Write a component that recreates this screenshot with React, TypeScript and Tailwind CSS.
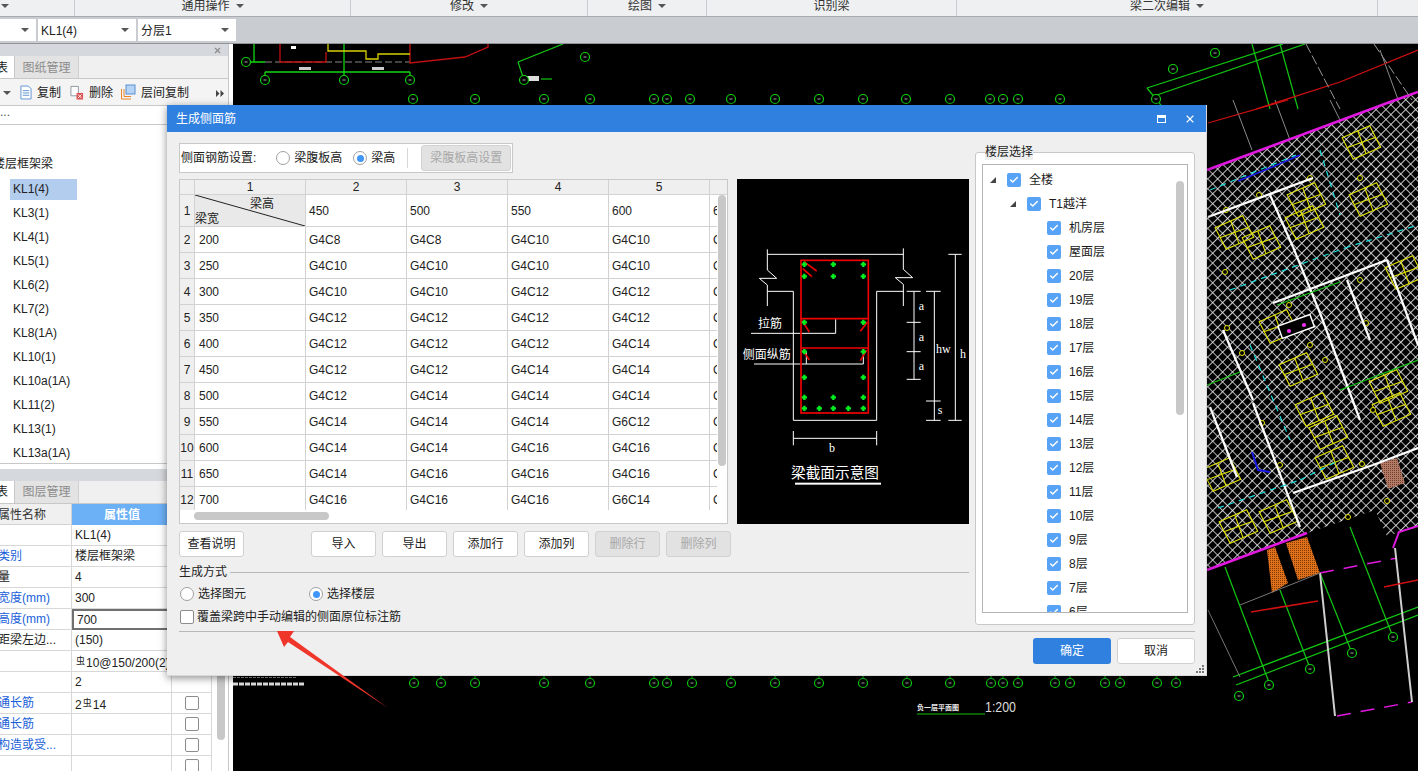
import React from 'react';
import { Check, X } from 'lucide-react';

const FONT = "font-['Liberation_Sans','Noto_Sans_CJK_SC',sans-serif]";

const kls = ['KL1(4)', 'KL3(1)', 'KL4(1)', 'KL5(1)', 'KL6(2)', 'KL7(2)', 'KL8(1A)', 'KL10(1)', 'KL10a(1A)', 'KL11(2)', 'KL13(1)', 'KL13a(1A)'];

const gridRows = [
  ['200', 'G4C8', 'G4C8', 'G4C10', 'G4C10'],
  ['250', 'G4C10', 'G4C10', 'G4C10', 'G4C10'],
  ['300', 'G4C10', 'G4C10', 'G4C12', 'G4C12'],
  ['350', 'G4C12', 'G4C12', 'G4C12', 'G4C12'],
  ['400', 'G4C12', 'G4C12', 'G4C12', 'G4C14'],
  ['450', 'G4C12', 'G4C12', 'G4C14', 'G4C14'],
  ['500', 'G4C12', 'G4C14', 'G4C14', 'G4C14'],
  ['550', 'G4C14', 'G4C14', 'G4C14', 'G6C12'],
  ['600', 'G4C14', 'G4C14', 'G4C16', 'G4C16'],
  ['650', 'G4C14', 'G4C16', 'G4C16', 'G4C16'],
  ['700', 'G4C16', 'G4C16', 'G4C16', 'G6C14'],
];

const floors = ['机房层', '屋面层', '20层', '19层', '18层', '17层', '16层', '15层', '14层', '13层', '12层', '11层', '10层', '9层', '8层', '7层', '6层'];

const Rebar = () => <span className="text-[9px] align-[3px] mx-[1px]">虫</span>;

const attrs: { label: string; value: React.ReactNode; blue?: boolean; focus?: boolean; check?: boolean }[] = [
  { label: '', value: 'KL1(4)' },
  { label: '类别', value: '楼层框架梁', blue: true },
  { label: '量', value: '4' },
  { label: '宽度(mm)', value: '300', blue: true },
  { label: '高度(mm)', value: '700', blue: true, focus: true },
  { label: '距梁左边...', value: '(150)' },
  { label: '', value: <><Rebar />10@150/200(2)</> },
  { label: '', value: '2' },
  { label: '通长筋', value: <>2<Rebar />14</>, blue: true, check: true },
  { label: '通长筋', value: '', blue: true, check: true },
  { label: '构造或受...', value: '', blue: true, check: true },
  { label: '', value: '', check: true },
];

const topCircles = [413, 475, 544, 590, 654, 667, 690, 731, 775, 819, 863, 906, 950, 990, 1003, 1018, 1060, 1156];
const bottomCircles = [414, 441, 475, 544, 590, 654, 667, 692, 731, 775, 819, 863, 907, 950, 991, 1003, 1018, 1055, 1070, 1105, 1120, 1157, 1176];
const yellowBoxes = [
  [1360, 143], [1305, 200], [1367, 200], [1233, 233], [1260, 243], [1303, 223], [1403, 273], [1277, 327],
  [1297, 370], [1387, 387], [1327, 433], [1220, 475], [1333, 463], [1237, 527], [1277, 517], [1390, 410], [1313, 410],
];
const yellowDots = [
  [1360, 178], [1259, 195], [1310, 178], [1225, 272], [1226, 210], [1360, 280], [1289, 305], [1310, 345], [1366, 323],
  [1227, 328], [1242, 353], [1325, 360], [1262, 423], [1280, 465], [1362, 464], [1373, 410], [1348, 517], [1387, 501],
];
const whiteLines = [
  [1208, 217, 1313, 178], [1270, 195, 1293, 247], [1293, 247, 1320, 313], [1273, 303, 1387, 260], [1347, 280, 1370, 340],
  [1223, 330, 1253, 400], [1210, 407, 1237, 477], [1253, 403, 1300, 527], [1293, 493, 1373, 465], [1373, 465, 1418, 448],
  [1387, 260, 1418, 345], [1320, 313, 1360, 420],
];
const cyanLines = [
  [1210, 190, 1296, 155], [1320, 150, 1340, 215], [1230, 290, 1345, 248], [1345, 248, 1418, 225], [1250, 345, 1290, 440],
  [1218, 508, 1300, 480], [1300, 480, 1340, 460],
];
const greenLines = [
  [1233, 677, 1418, 607], [1236, 685, 1418, 615], [1225, 567, 1270, 685], [1280, 590, 1310, 668], [1320, 573, 1352, 653],
  [1350, 527, 1393, 637], [1277, 305, 1340, 282], [1207, 385, 1240, 372], [1340, 390, 1418, 360], [1147, 88, 1283, 44],
  [1154, 96, 1305, 44], [1147, 88, 1156, 99], [1156, 99, 1165, 110], [518, 62, 563, 44], [518, 62, 524, 80], [541, 79, 552, 79],
  [1252, 44, 1270, 109], [1280, 44, 1298, 109],
];

// 绘图区底图,坐标直接用屏幕坐标
const CadCanvas = () => (
  <svg viewBox="233 44 1185 727" className="block w-full h-full">
    <defs>
      <pattern id="hatch" width="7" height="7" patternUnits="userSpaceOnUse" patternTransform="rotate(45)">
        <path d="M0 0H7M0 0V7" stroke="#f0f0f0" strokeWidth="1.7" fill="none" />
      </pattern>
      <pattern id="orange" width="2" height="2" patternUnits="userSpaceOnUse">
        <rect width="2" height="2" fill="#e0701a" />
        <rect width="1" height="1" fill="#7a3a00" />
      </pattern>
      <pattern id="brown" width="2" height="2" patternUnits="userSpaceOnUse">
        <rect width="2" height="2" fill="#b47a66" />
        <rect width="1" height="1" fill="#6a4030" />
      </pattern>
    </defs>
    <rect x="233" y="44" width="1185" height="727" fill="#000" />
    <polygon points="1207,170 1418,92 1418,527 1387,536 1375,510 1307,533 1207,570" fill="url(#hatch)" />
    <path d="M1233 100L1252 150M1275 100L1290 140M1330 100L1340 120M1380 50L1400 105" stroke="#8a8a8a" fill="none" />
    <polyline points="1207,170 1390,102 1418,92" stroke="#e018e0" strokeWidth="2.5" fill="none" />
    <polyline points="1207,570 1307,533" stroke="#e018e0" strokeWidth="2.5" fill="none" />
    <polyline points="1393,548 1399,532 1418,526" stroke="#e018e0" strokeWidth="2" fill="none" />
    <line x1="1320" y1="573" x2="1397" y2="558" stroke="#e018e0" strokeWidth="1.5" strokeDasharray="14 10" />
    <line x1="1337" y1="716" x2="1412" y2="702" stroke="#e018e0" strokeWidth="1.5" strokeDasharray="14 10" />
    <polygon points="1267,550 1275,547 1288,583 1272,593" fill="url(#orange)" />
    <polygon points="1286,543 1307,537 1320,573 1298,580" fill="url(#orange)" />
    <polygon points="1380,463 1397,458 1405,483 1388,489" fill="url(#brown)" />
    {yellowBoxes.map(([x, y], i) => (
      <g key={i} transform={`rotate(-20 ${x} ${y})`} stroke="#e4e400" strokeWidth="1.1" fill="none">
        <path d={`M${x - 15} ${y - 11}L${x + 15} ${y - 13}L${x + 18} ${y + 11}L${x - 12} ${y + 13}Z`} />
        <path d={`M${x - 14} ${y}H${x + 16}M${x + 2} ${y - 12}V${y + 12}`} />
      </g>
    ))}
    {yellowDots.map(([x, y], i) => (
      <circle key={i} cx={x} cy={y} r={2.5} stroke="#e8e800" fill="#000" />
    ))}
    {whiteLines.map(([a, b, c, d], i) => (
      <line key={i} x1={a} y1={b} x2={c} y2={d} stroke="#ffffff" strokeWidth="2.2" />
    ))}
    {cyanLines.map(([a, b, c, d], i) => (
      <line key={i} x1={a} y1={b} x2={c} y2={d} stroke="#19e0e0" strokeWidth="1.2" strokeDasharray="6 5" />
    ))}
    <polyline points="1238,181 1270,168 1300,155" stroke="#1a1ae8" strokeWidth="1.5" fill="none" />
    <polyline points="1252,452 1258,470 1270,472" stroke="#1a1ae8" strokeWidth="2" fill="none" />
    <rect x="1279" y="320" width="34" height="13" transform="rotate(-20 1296 326)" fill="#000" stroke="#fff" strokeWidth="1.5" />
    <circle cx="1289" cy="331" r="2" fill="#ff30ff" />
    <circle cx="1304" cy="325" r="2" fill="#ff30ff" />
    {greenLines.map(([a, b, c, d], i) => (
      <line key={i} x1={a} y1={b} x2={c} y2={d} stroke="#12c812" strokeWidth="1.2" />
    ))}
    <path d="M1320 573L1335 716M1395 548L1412 702" stroke="#cfcfcf" strokeWidth="2" fill="none" />
    <path d="M1208 610L1240 677M1240 605L1320 573" stroke="#777" strokeWidth="1" fill="none" />
    <path d="M1251 612L1318 601M1384 587L1418 580" stroke="#d01010" strokeWidth="1.5" fill="none" />
    <path d="M1256 109L1340 82L1418 50" stroke="#d01010" strokeWidth="1.2" fill="none" />
    <path d="M1306 44L1340 109M1374 44L1412 100" stroke="#999" strokeWidth="1" strokeDasharray="10 3" fill="none" />
    <path d="M1208 123L1288 100" stroke="#d01010" strokeWidth="1.2" fill="none" />

    <path d="M254 44V62H265M265 72H410M344 44V72M265 72V80M344 72V80M410 72V80M246 62H254" stroke="#12d812" strokeWidth="1.3" fill="none" />
    <path d="M265 62H410" stroke="#888" strokeWidth="1.2" strokeDasharray="7 3" fill="none" />
    <path d="M280 44V62H326V52M410 44V63L465 57L488 47V44" stroke="#c01010" strokeWidth="1.3" fill="none" />
    <path d="M328 44V51H366V59H378V54H410" stroke="#d8d000" strokeWidth="1.3" fill="none" />
    <rect x="299" y="67" width="12" height="3" fill="#ccc" />
    <rect x="372" y="67" width="12" height="3" fill="#ccc" />
    <rect x="291" y="46" width="5" height="3" fill="#fff" />
    <rect x="525" y="76" width="14" height="5" fill="#ddd" />
    {[[246, 62], [265, 80], [344, 80], [410, 80], [585, 57], [524, 80], [1173, 69], [1215, 53], [1239, 696], [1269, 685], [1310, 669], [1352, 653], [1393, 637]].map(([x, y], i) => (
      <g key={i}>
        <circle cx={x} cy={y} r={4.5} stroke="#10d010" strokeWidth="1.2" fill="#000" />
        <rect x={x - 1.5} y={y - 0.5} width={3} height={1} fill="#aaa" />
      </g>
    ))}
    {topCircles.map((x) => (
      <g key={x}>
        <circle cx={x} cy={99} r={4.5} stroke="#10d010" strokeWidth="1.2" fill="#000" />
        <rect x={x - 1.5} y={98.5} width={3} height={1} fill="#aaa" />
      </g>
    ))}
    {bottomCircles.map((x) => (
      <g key={x}>
        <path d={`M${x} 676V679`} stroke="#10d010" />
        <circle cx={x} cy={683} r={4.5} stroke="#10d010" strokeWidth="1.2" fill="#000" />
        <rect x={x - 1.5} y={682.5} width={3} height={1} fill="#aaa" />
      </g>
    ))}
    <line x1="233" y1="684" x2="305" y2="684" stroke="#ddd" strokeWidth="3" strokeDasharray="5 1" />
    <line x1="233" y1="677.5" x2="296" y2="677.5" stroke="#888" strokeWidth="1" strokeDasharray="3 1" />
    <text x="917" y="710" fill="#e8e8e8" fontSize="7" fontWeight="700">负一层平面图</text>
    <line x1="917" y1="714" x2="985" y2="714" stroke="#10c010" strokeWidth="1.2" />
    <text x="985" y="712" fill="#dcdcdc" fontSize="15" textLength="31" lengthAdjust="spacingAndGlyphs">1:200</text>
  </svg>
);

// 梁截面示意图
const BeamPreview = () => (
  <svg viewBox="21 27 696 1035" width="232" height="345" className="block bg-black shrink-0">
    <g stroke="#fff" strokeWidth="3" fill="none">
      <path d="M112 238V300L140 325H88L112 345V408M112 253H520M520 235V298L548 323H496L520 343V408" />
      <path d="M112 364H190V751H440V364H520" />
      <path d="M63 490H317V446M72 582H400V545M229 545V582" />
      <path d="M552 364V628M530 364H572M530 457H572M530 545H572M530 628H572" />
      <path d="M613 364V751M588 364H632M588 693H632M588 751H632" />
      <path d="M676 253V751M655 253H695M655 751H695" />
      <path d="M190 805H440M190 783V826M440 783V826" />
    </g>
    <g stroke="#f00000" strokeWidth="5" fill="none">
      <rect x="213" y="271" width="202" height="458" />
      <path d="M213 446H415M213 534H415" />
      <path d="M222 275L260 303M218 296L246 320M216 452L238 486M412 457L391 484M218 540L238 570M410 540L391 572" />
    </g>
    {[[223, 283], [310, 283], [400, 283], [223, 319], [310, 319], [400, 319], [223, 457], [400, 457], [223, 545], [400, 545], [223, 622], [400, 622], [223, 682], [310, 682], [400, 682], [223, 715], [268, 715], [310, 715], [355, 715], [400, 715]].map(([x, y], i) => (
      <path key={i} d={`M${x - 8} ${y}H${x + 8}M${x} ${y - 8}V${y + 8}`} stroke="#00f020" strokeWidth="7" />
    ))}
    <g fill="#fff" fontSize="36">
      <text x="84" y="475">拉筋</text>
      <text x="38" y="568">侧面纵筋</text>
      <text x="566" y="420" fontFamily="'Liberation Serif',serif">a</text>
      <text x="566" y="514" fontFamily="'Liberation Serif',serif">a</text>
      <text x="566" y="600" fontFamily="'Liberation Serif',serif">a</text>
      <text x="618" y="548" fontFamily="'Liberation Serif',serif">hw</text>
      <text x="690" y="564" fontFamily="'Liberation Serif',serif">h</text>
      <text x="623" y="733" fontFamily="'Liberation Serif',serif">s</text>
      <text x="297" y="846" fontFamily="'Liberation Serif',serif">b</text>
      <text x="183" y="925" fontSize="44">梁截面示意图</text>
    </g>
    <rect x="195" y="938" width="258" height="6" fill="#fff" />
  </svg>
);

const Radio = ({ checked, label, className = '' }: { checked?: boolean; label: string; className?: string }) => (
  <span className={`flex items-center gap-[4px] ${className}`}>
    <span className="w-[14px] h-[14px] rounded-full bg-white border border-[#a0a0a0] flex items-center justify-center shrink-0">
      {checked && <span className="w-[7px] h-[7px] rounded-full bg-[#3f96f7]" />}
    </span>
    <span>{label}</span>
  </span>
);

const TreeCheck = ({ label, indent }: { label: string; indent: string }) => (
  <div className={`h-[24px] flex items-center gap-[8px] ${indent}`}>
    <span className="w-[14px] h-[14px] rounded-[2px] bg-[#57a3f8] flex items-center justify-center shrink-0">
      <Check size={10} strokeWidth={3.5} className="text-white" />
    </span>
    <span className="text-[12px] text-[#1a1a1a]">{label}</span>
  </div>
);

const Caret = () => <span className="w-0 h-0 border-l-[4px] border-r-[4px] border-t-[4px] border-l-transparent border-r-transparent border-t-[#555]" />;

const DialogButton = ({ label, disabled, className = '' }: { label: string; disabled?: boolean; className?: string }) => (
  <button
    className={`w-[65px] h-[26px] rounded-[3px] border text-[12px] ${
      disabled ? 'bg-[#e2e2e2] border-[#d2d2d2] text-[#a8a8a8]' : 'bg-white border-[#d0d0d0] text-[#222]'
    } ${className}`}
  >
    {label}
  </button>
);

const cellLine = 'border-r border-b border-[#d2d2d2]';

const SideRebarGrid = () => (
  <div className="relative w-[549px] h-[345px] border border-[#c8c8c8] bg-white overflow-hidden shrink-0">
    <div className="h-[332px] overflow-hidden">
      <div className="grid grid-cols-[15px_111px_101px_101px_101px_101px_101px] text-[12px] text-[#222]">
        <div className={`h-[15px] bg-[#efefef] ${cellLine}`} />
        {['1', '2', '3', '4', '5', '6'].map((n) => (
          <div key={n} className={`h-[15px] leading-[14px] text-center bg-[#efefef] ${cellLine}`}>{n}</div>
        ))}
        <div className={`h-[32px] flex items-center justify-center bg-[#efefef] ${cellLine}`}>1</div>
        <div className={`relative h-[32px] bg-[#e9e9e9] ${cellLine}`}>
          <svg className="absolute inset-0" width="110" height="31">
            <line x1="0" y1="0" x2="110" y2="31" stroke="#222" strokeWidth="1" />
          </svg>
          <span className="absolute right-[31px] top-[1px] leading-[16px]">梁高</span>
          <span className="absolute left-0 -bottom-[1px] leading-[15px]">梁宽</span>
        </div>
        {['450', '500', '550', '600', '650'].map((h) => (
          <div key={h} className={`h-[32px] leading-[33px] pl-[3px] whitespace-nowrap overflow-hidden ${cellLine}`}>{h}</div>
        ))}
        {gridRows.map((row, i) => (
          <React.Fragment key={row[0]}>
            <div className={`h-[26px] leading-[26px] text-center bg-[#efefef] ${cellLine}`}>{i + 2}</div>
            {row.map((c, j) => (
              <div key={j} className={`h-[26px] leading-[27px] ${j === 0 ? 'pl-[4px]' : 'pl-[3px]'} ${cellLine}`}>{c}</div>
            ))}
            <div className={`h-[26px] leading-[27px] pl-[3px] overflow-hidden ${cellLine}`}>G4C10</div>
          </React.Fragment>
        ))}
      </div>
    </div>
    <div className="absolute right-0 top-[15px] bottom-[14px] w-[10px] bg-white" />
    <div className="absolute right-[1px] top-[15px] w-[8px] h-[271px] rounded-[4px] bg-[#c8c8c8]" />
    <div className="absolute left-0 right-0 bottom-0 h-[13px] bg-white" />
    <div className="absolute left-[14px] bottom-[3px] w-[135px] h-[8px] rounded-[4px] bg-[#c8c8c8]" />
  </div>
);

const Dialog = () => (
  <div className="absolute left-[167px] top-[105px] w-[1040px] h-[571px] bg-[#efefef] border-r border-b border-[#d8d8d8] shadow-[0_2px_8px_rgba(0,0,0,0.45)] flex flex-col text-[12px] text-[#222]">
    <div className="h-[27px] bg-[#2f80df] flex items-center justify-between pl-[9px] pr-[10px] text-white shrink-0">
      <span>生成侧面筋</span>
      <div className="flex items-center gap-[18px]">
        <span className="w-[9px] h-[8px] border border-white border-t-[3px]" />
        <X size={12} strokeWidth={2.2} />
      </div>
    </div>
    <div className="flex-1 flex flex-col pt-[11px] pl-[12px] pr-[11px] relative">
      <div className="flex gap-[6px] h-[488px]">
        <div className="w-[790px] shrink-0">
          <div className="w-[334px] h-[30px] bg-white border border-[#c8c8c8] flex items-center pl-[1px]">
            <span className="mr-[20px] whitespace-nowrap">侧面钢筋设置:</span>
            <Radio label="梁腹板高" />
            <Radio checked label="梁高" className="ml-[11px]" />
            <span className="w-px h-[20px] bg-[#d8d8d8] ml-[12px] mr-[13px]" />
            <button className="w-[90px] h-[26px] bg-[#e2e2e2] border border-[#d2d2d2] rounded-[3px] text-[#a8a8a8]">梁腹板高设置</button>
          </div>
          <div className="flex gap-[9px] mt-[6px]">
            <SideRebarGrid />
            <BeamPreview />
          </div>
          <div className="flex mt-[7px] w-[552px]">
            <DialogButton label="查看说明" className="mr-[67px]" />
            <div className="flex gap-[6px]">
              <DialogButton label="导入" />
              <DialogButton label="导出" />
              <DialogButton label="添加行" />
              <DialogButton label="添加列" />
              <DialogButton label="删除行" disabled />
              <DialogButton label="删除列" disabled />
            </div>
          </div>
          <div className="flex items-center mt-[6px] h-[18px]">
            <span>生成方式</span>
            <span className="flex-1 h-px bg-[#b8b8b8] ml-[3px]" />
          </div>
          <div className="flex items-center mt-[4px] h-[18px] pl-[1px]">
            <Radio label="选择图元" className="w-[129px]" />
            <Radio checked label="选择楼层" />
          </div>
          <div className="flex items-center gap-[3px] mt-[5px] h-[18px] pl-[1px]">
            <span className="w-[14px] h-[14px] rounded-[2px] bg-white border border-[#8c8c8c]" />
            <span>覆盖梁跨中手动编辑的侧面原位标注筋</span>
          </div>
        </div>
        <fieldset className="relative w-[220px] h-[473px] mt-[9px] bg-white border border-[#c8c8c8] rounded-[3px] px-[6px] pt-[11px]">
          <span className="absolute left-[9px] -top-[9px] leading-[16px] bg-[#efefef]">楼层选择</span>
          <div className="relative h-[449px] border border-[#b4b4b4] overflow-hidden pt-[3px]">
            <div className="h-[24px] flex items-center pl-[7px]">
              <span className="w-0 h-0 border-l-[6px] border-b-[6px] border-l-transparent border-b-[#444] mr-[11px]" />
              <TreeCheck label="全楼" indent="" />
            </div>
            <div className="h-[24px] flex items-center pl-[27px]">
              <span className="w-0 h-0 border-l-[6px] border-b-[6px] border-l-transparent border-b-[#444] mr-[11px]" />
              <TreeCheck label="T1越洋" indent="" />
            </div>
            {floors.map((f) => (
              <TreeCheck key={f} label={f} indent="pl-[64px]" />
            ))}
            <div className="absolute right-[3px] top-[16px] w-[8px] h-[234px] rounded-[4px] bg-[#c8c8c8]" />
          </div>
        </fieldset>
      </div>
      <div className="h-px bg-[#b8b8b8]" />
      <div className="flex justify-end gap-[6px] mt-[6px]">
        <button className="w-[78px] h-[26px] rounded-[3px] bg-[#2f80df] text-white">确定</button>
        <button className="w-[78px] h-[26px] rounded-[3px] bg-white border border-[#d0d0d0]">取消</button>
      </div>
      <svg className="absolute right-[1px] bottom-[1px]" width="9" height="9">
        <path d="M6 0h2v2h-2zM3 3h2v2h-2zM6 3h2v2h-2zM0 6h2v2h-2zM3 6h2v2h-2zM6 6h2v2h-2z" fill="#777" />
      </svg>
    </div>
  </div>
);

const LeftPanel = () => (
  <div className="w-[233px] shrink-0 bg-white flex flex-col overflow-hidden text-[12px] text-[#222]">
    <div className="w-[229px] flex-1 flex flex-col border-r border-[#c8c8c8] min-h-0">
      <div className="h-[12px] bg-[#d5d8dd] flex items-center justify-end pr-[6px] shrink-0">
        <X size={9} strokeWidth={3} className="text-[#8a8a8a]" />
      </div>
      <div className="h-[23px] bg-[#f0f0f0] flex border-b border-[#c8c8c8] shrink-0">
        <span className="w-[15px] bg-white border-r border-[#c8c8c8] overflow-hidden leading-[25px]"><span className="block -ml-[4px]">表</span></span>
        <span className="w-[64px] bg-[#e3e3e3] border-r border-[#d0d0d0] text-center text-[#8c8c8c] leading-[25px]">图纸管理</span>
      </div>
      <div className="h-[27px] bg-[#f4f4f4] border-b border-[#c8c8c8] flex items-center shrink-0 pl-[3px] pt-[2px]">
        <Caret />
        <svg width="12" height="15" viewBox="0 0 13 16" className="ml-[9px] -mt-[2px]">
          <path d="M1 1H9L12 4V15H1Z" fill="#fff" stroke="#5a8fd0" />
          <path d="M3 6H10M3 8.5H10M3 11H10" stroke="#5a8fd0" />
        </svg>
        <span className="ml-[5px]">复制</span>
        <svg width="14" height="15" viewBox="0 0 15 15" className="ml-[9px] -mt-[2px]">
          <path d="M1 1H9V11H1Z" fill="#fff" stroke="#8a94a0" />
          <rect x="7" y="8" width="7" height="7" fill="#e05050" />
          <path d="M8.5 9.5L12.5 13.5M12.5 9.5L8.5 13.5" stroke="#fff" />
        </svg>
        <span className="ml-[5px]">删除</span>
        <svg width="15" height="16" viewBox="0 0 15 16" className="ml-[8px] -mt-[2px]">
          <path d="M0.5 15V5M0.5 15H10" stroke="#e8852a" fill="none" />
          <path d="M3 12.5V5M3 12.5H10" stroke="#e8852a" fill="none" />
          <rect x="5" y="1" width="9" height="9" fill="#b5d3f5" stroke="#5a8fd0" />
        </svg>
        <span className="ml-[5px]">层间复制</span>
        <svg width="8" height="7" viewBox="0 0 8 7" className="ml-auto mr-[4px]">
          <path d="M0 0L3.5 3.5L0 7ZM4.5 0L8 3.5L4.5 7Z" fill="#444" />
        </svg>
      </div>
      <div className="h-[19px] border-b border-[#c8c8c8] leading-[12px] shrink-0 text-[#555]">...</div>
      <div className="h-[339px] border-b border-[#c8c8c8] overflow-hidden shrink-0 pt-[27px]">
        <div className="-ml-[7px] h-[24px] leading-[24px] whitespace-nowrap">楼层框架梁</div>
        <div className="mt-[3px]">
          {kls.map((k, i) => (
            <div key={k} className="h-[24px] pl-[10px]">
              <span className={`block w-[67px] h-[21px] leading-[21px] pl-[3px] ${i === 0 ? 'bg-[#b3cdee]' : ''}`}>{k}</span>
            </div>
          ))}
        </div>
      </div>
      <div className="h-[5px] bg-white shrink-0" />
      <div className="h-[12px] bg-[#d5d8dd] shrink-0" />
      <div className="h-[23px] bg-[#f0f0f0] flex shrink-0 border-b border-[#c8c8c8]">
        <span className="w-[15px] bg-white border-r border-[#c8c8c8] overflow-hidden leading-[22px]"><span className="block -ml-[4px]">表</span></span>
        <span className="w-[64px] bg-[#e3e3e3] border-r border-[#d0d0d0] text-center text-[#8c8c8c] leading-[22px]">图层管理</span>
      </div>
      <div className="relative flex-1 overflow-hidden">
        <div className="grid grid-cols-[72px_100px_40px] w-[212px]">
          <div className="h-[21px] leading-[22px] bg-[#f0f0f0] border-r border-b border-[#d2d2d2] whitespace-nowrap overflow-hidden text-[#333]"><span className="block -ml-[2px]">属性名称</span></div>
          <div className="col-span-2 h-[21px] leading-[22px] bg-[#6cb0f6] text-white text-center font-bold pr-[40px]">属性值</div>
          {attrs.map((a, i) => (
            <React.Fragment key={i}>
              <div className={`h-[21px] leading-[21px] border-r border-b border-[#d8d8d8] whitespace-nowrap overflow-hidden ${a.blue ? 'text-[#1a5fd8]' : 'text-[#222]'}`}>
                <span className="block -ml-[2px]">{a.label}</span>
              </div>
              <div className={`h-[21px] pl-[3px] whitespace-nowrap overflow-hidden ${a.focus ? 'border-2 border-[#707070] leading-[19px]' : 'border-r border-b border-[#d8d8d8] leading-[21px]'}`}>{a.value}</div>
              <div className="h-[21px] border-r border-b border-[#d8d8d8] flex items-center justify-center">
                {a.check && <span className="w-[14px] h-[14px] rounded-[2px] border border-[#8c8c8c] bg-white" />}
              </div>
            </React.Fragment>
          ))}
        </div>
        <div className="absolute left-[217px] top-0 h-[236px] w-[8px] rounded-[4px] bg-[#c8c8c8]" />
      </div>
    </div>
  </div>
);

const Combo = ({ label, className }: { label: string; className: string }) => (
  <div className={`h-[22px] bg-white flex items-center justify-between pl-[3px] pr-[7px] text-[12px] text-[#222] ${className}`}>
    <span className="pt-[1px]">{label}</span>
    <Caret />
  </div>
);

const ribbon = [
  { label: '', w: 'w-[75px]', pad: 'justify-start pl-[1px]' },
  { label: '通用操作', w: 'w-[276px]', pad: 'justify-center' },
  { label: '修改', w: 'w-[237px]', pad: 'justify-center' },
  { label: '绘图', w: 'w-[119px]', pad: 'justify-center' },
  { label: '识别梁', w: 'w-[250px]', pad: 'justify-center', noCaret: true },
  { label: '梁二次编辑', w: 'w-[421px]', pad: 'justify-center' },
];

const App = () => (
  <div className={`relative w-[1418px] h-[771px] overflow-hidden flex flex-col bg-white ${FONT}`}>
    <div className="h-[16px] bg-[#eef0f1] flex shrink-0 overflow-hidden">
      {ribbon.map((r) => (
        <div key={r.label} className={`${r.w} -mt-[5px] flex items-center gap-[6px] border-r border-[#c8ccd0] text-[12px] text-[#333] ${r.pad}`}>
          {r.label && <span>{r.label}</span>}
          {!r.noCaret && <Caret />}
        </div>
      ))}
    </div>
    <div className="h-[28px] bg-[#c9ccd1] border-t border-[#a8abaf] border-b border-b-[#8f9296] flex items-center gap-[2px] shrink-0">
      <Combo label="" className="w-[36px]" />
      <Combo label="KL1(4)" className="w-[98px]" />
      <Combo label="分层1" className="w-[98px]" />
    </div>
    <div className="flex flex-1 min-h-0">
      <LeftPanel />
      <div className="flex-1 min-w-0">
        <CadCanvas />
      </div>
    </div>
    <Dialog />
    <svg className="absolute left-[270px] top-[625px]" width="125" height="90" viewBox="270 625 125 90">
      <polygon points="277,631 294,631 290,637 388,708 288,642 284,647" fill="#f0352b" />
    </svg>
  </div>
);

export default App;
